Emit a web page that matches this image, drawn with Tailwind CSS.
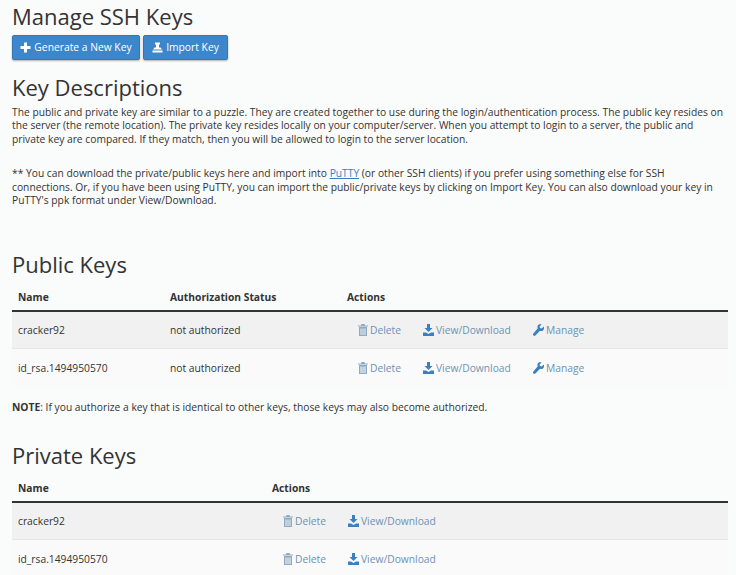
<!DOCTYPE html>
<html lang="en">
<head>
<meta charset="UTF-8">
<title>Manage SSH Keys</title>
<script src="https://cdn.jsdelivr.net/npm/@tailwindcss/browser@4"></script>
</head>
<body class="h-[575px] w-[736px] overflow-hidden bg-[#fafbfb] pl-3 pr-2 font-['Open_Sans',sans-serif] text-[#333]">
  <h1 class="pt-[1px] text-[22px] leading-[30px]">Manage SSH Keys</h1>
  <div class="mt-[4px] flex gap-[3px]">
    <button class="flex h-[25px] w-[128px] items-center justify-center gap-[3px] rounded-[2px] border border-[#3478b5] bg-[#3c87cc] text-[10.3px] text-white shadow-[0_1px_2px_rgba(0,0,0,.3)]">
      <svg class="h-[11px] w-[11px]" viewBox="0 0 11 11" fill="#fff"><path d="M4 .5h3V4h3.500v3H7v3.500H4V7H.5V4H4z"/></svg>
      Generate a New Key
    </button>
    <button class="flex h-[25px] w-[85px] items-center justify-center gap-[3px] rounded-[2px] border border-[#3478b5] bg-[#3c87cc] text-[10.3px] text-white shadow-[0_1px_2px_rgba(0,0,0,.3)]">
      <svg class="h-[11px] w-[11px]" viewBox="0 0 11 11" fill="#fff"><path d="M3 .5h5v1.500L7 3v2.500h1.500L10 7.500H1l1.500-2H4V3L3 2zM.5 8.500h10v2H.5z"/></svg>
      Import Key
    </button>
  </div>
  <h2 class="mt-[11px] text-[22px] leading-[32px]">Key Descriptions</h2>
  <p class="mt-[3px] text-[10.27px] leading-[13.4px]">The public and private key are similar to a puzzle. They are created together to use during the login/authentication process. The public key resides on the server (the remote location). The private key resides locally on your computer/server. When you attempt to login to a server, the public and private key are compared. If they match, then you will be allowed to login to the server location.</p>
  <p class="mt-[21px] pr-[6px] text-[10.27px] leading-[13.4px]">** You can download the private/public keys here and import into <a class="text-[#3a7fbf] underline">PuTTY</a> (or other SSH clients) if you prefer using something else for SSH connections. Or, if you have been using PuTTY, you can import the public/private keys by clicking on Import Key. You can also download your key in PuTTY's ppk format under View/Download.</p>

  <h2 class="mt-[41px] text-[22px] leading-[32px]">Public Keys</h2>
  <div class="mt-[1px] flex h-[31px] items-center border-b-2 border-[#333] pl-[6px] pt-[3px] text-[10.27px] font-bold">
    <span class="w-[152px]">Name</span><span class="w-[177px]">Authorization Status</span><span>Actions</span>
  </div>
  <div class="flex h-[37px] items-center border-b border-[#e4e6e8] bg-[#f1f1f1] pl-[6px] text-[10.27px]">
    <span class="w-[152px]">cracker92</span><span class="w-[188px]">not authorized</span>
    <a class="flex w-[65px] items-center gap-[2px] text-[#6c93b5]"><svg class="h-[12px] w-[10px]" viewBox="0 0 10 12" fill="#8fabc4"><path d="M3.500 0h3l.5 1.500h3v1H0v-1h3zM1 3h8v9H1zm1.500 1.500v6.500h1V4.500zm2 0v6.500h1V4.500zm2 0v6.500h1V4.500z" fill-rule="evenodd"/></svg>Delete</a>
    <a class="flex w-[110px] items-center gap-[2px] text-[#6c93b5]"><svg class="h-[12px] w-[11px]" viewBox="0 0 11 12" fill="#3a7fbf"><path d="M4 0h3v4h2.500L5.500 8 1.500 4H4zM0 8.500h3l2.500 1.500L8 8.500h3V12H0z"/></svg>View/Download</a>
    <a class="flex items-center gap-[2px] text-[#6c93b5]"><svg class="h-[12px] w-[11px]" viewBox="0 0 11 12" fill="#3a7fbf"><path d="M10.800 2.500 8.700 4.600 7 4.100 6.500 2.500 8.600.4C7 -.2 5.400.3 4.800 1.500 4.300 2.500 4.400 3.500 4.800 4.300L.4 9.400c-.6.7-.5 1.500 0 2 .6.600 1.400.6 2 0L7 6.800c1 .4 2 .3 3-.3 1-.8 1.300-2.500.8-4z"/></svg>Manage</a>
  </div>
  <div class="flex h-[38px] items-center bg-[#fafafa] pl-[6px] text-[10.27px]">
    <span class="w-[152px]">id_rsa.1494950570</span><span class="w-[188px]">not authorized</span>
    <a class="flex w-[65px] items-center gap-[2px] text-[#6c93b5]"><svg class="h-[12px] w-[10px]" viewBox="0 0 10 12" fill="#8fabc4"><path d="M3.500 0h3l.5 1.500h3v1H0v-1h3zM1 3h8v9H1zm1.500 1.500v6.500h1V4.500zm2 0v6.500h1V4.500zm2 0v6.500h1V4.500z" fill-rule="evenodd"/></svg>Delete</a>
    <a class="flex w-[110px] items-center gap-[2px] text-[#6c93b5]"><svg class="h-[12px] w-[11px]" viewBox="0 0 11 12" fill="#3a7fbf"><path d="M4 0h3v4h2.500L5.500 8 1.500 4H4zM0 8.500h3l2.500 1.500L8 8.500h3V12H0z"/></svg>View/Download</a>
    <a class="flex items-center gap-[2px] text-[#6c93b5]"><svg class="h-[12px] w-[11px]" viewBox="0 0 11 12" fill="#3a7fbf"><path d="M10.800 2.500 8.700 4.600 7 4.100 6.500 2.500 8.600.4C7 -.2 5.400.3 4.800 1.500 4.300 2.500 4.400 3.500 4.800 4.300L.4 9.400c-.6.7-.5 1.500 0 2 .6.600 1.400.6 2 0L7 6.800c1 .4 2 .3 3-.3 1-.8 1.300-2.500.8-4z"/></svg>Manage</a>
  </div>
  <p class="mt-[13px] text-[10.27px] leading-[14px]"><b>NOTE</b>: If you authorize a key that is identical to other keys, those keys may also become authorized.</p>

  <h2 class="mt-[25px] text-[22px] leading-[32px]">Private Keys</h2>
  <div class="mt-[1px] flex h-[31px] items-center border-b-2 border-[#333] pl-[6px] pt-[3px] text-[10.27px] font-bold">
    <span class="w-[254px]">Name</span><span>Actions</span>
  </div>
  <div class="flex h-[37px] items-center border-b border-[#e4e6e8] bg-[#f1f1f1] pl-[6px] text-[10.27px]">
    <span class="w-[265px]">cracker92</span>
    <a class="flex w-[65px] items-center gap-[2px] text-[#6c93b5]"><svg class="h-[12px] w-[10px]" viewBox="0 0 10 12" fill="#8fabc4"><path d="M3.500 0h3l.5 1.500h3v1H0v-1h3zM1 3h8v9H1zm1.500 1.500v6.500h1V4.500zm2 0v6.500h1V4.500zm2 0v6.500h1V4.500z" fill-rule="evenodd"/></svg>Delete</a>
    <a class="flex items-center gap-[2px] text-[#6c93b5]"><svg class="h-[12px] w-[11px]" viewBox="0 0 11 12" fill="#3a7fbf"><path d="M4 0h3v4h2.500L5.500 8 1.500 4H4zM0 8.500h3l2.500 1.500L8 8.500h3V12H0z"/></svg>View/Download</a>
  </div>
  <div class="flex h-[38px] items-center bg-[#fafafa] pl-[6px] text-[10.27px]">
    <span class="w-[265px]">id_rsa.1494950570</span>
    <a class="flex w-[65px] items-center gap-[2px] text-[#6c93b5]"><svg class="h-[12px] w-[10px]" viewBox="0 0 10 12" fill="#8fabc4"><path d="M3.500 0h3l.5 1.500h3v1H0v-1h3zM1 3h8v9H1zm1.500 1.500v6.500h1V4.500zm2 0v6.500h1V4.500zm2 0v6.500h1V4.500z" fill-rule="evenodd"/></svg>Delete</a>
    <a class="flex items-center gap-[2px] text-[#6c93b5]"><svg class="h-[12px] w-[11px]" viewBox="0 0 11 12" fill="#3a7fbf"><path d="M4 0h3v4h2.500L5.500 8 1.500 4H4zM0 8.500h3l2.500 1.500L8 8.500h3V12H0z"/></svg>View/Download</a>
  </div>
</body>
</html>
